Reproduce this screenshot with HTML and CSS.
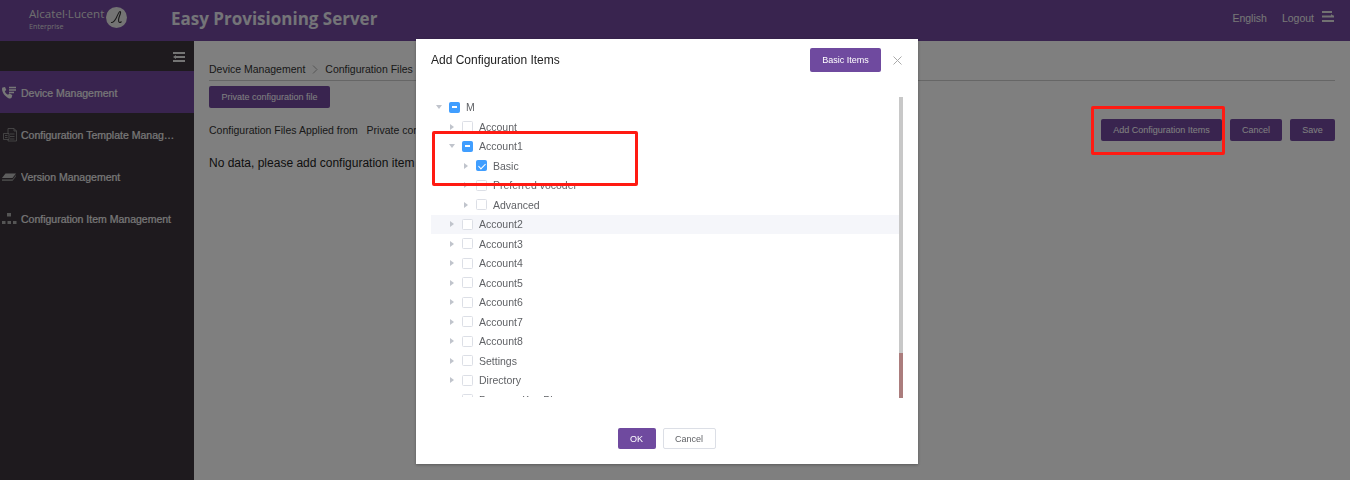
FILE: index.html
```html
<!DOCTYPE html>
<html lang="en">
<head>
    <meta charset="UTF-8">
    <meta name="viewport" content="width=device-width, initial-scale=1.0">
    <title>Easy Provisioning Server</title>
    <link rel="stylesheet" href="styles.css">
</head>
<body>

<header class="topbar">
    <div class="logo">
        <div class="logo-text">
            <span class="logo-name">Alcatel·Lucent</span>
            <span class="logo-sub">Enterprise</span>
        </div>
        <svg class="logo-mark" width="21" height="21" viewBox="0 0 21 21">
            <circle cx="10.5" cy="10.5" r="10.5" fill="#e8e8e8"/>
            <path d="M5 15.500c2 .5 4-2 5.500-5S13 4.500 14 4.500c1 0 .5 2-.5 4.500s-1.500 6 0 6.500c.8.200 1.500-.5 2-1" fill="none" stroke="#333" stroke-width="1.100"/>
        </svg>
    </div>
    <div class="app-title">Easy Provisioning Server</div>
    <nav class="topnav">
        <a>English</a>
        <a>Logout</a>
        <svg width="12" height="11" viewBox="0 0 12 11">
            <path d="M0 1h10M0 5.500h12M0 10h12" stroke="#e4e4e4" stroke-width="1.800"/>
            <path d="M9 3l3 2.500H9z" fill="#e4e4e4"/>
        </svg>
    </nav>
</header>

<div class="layout">
    <aside class="sidebar">
        <div class="side-toggle">
            <svg width="12" height="10" viewBox="0 0 12 10">
                <path d="M0 1h12M3 5h9M0 9h12" stroke="#e8e8e8" stroke-width="1.800"/>
                <path d="M3 3L0 5l3 2z" fill="#e8e8e8"/>
            </svg>
        </div>
        <a class="side-item active">
            <svg class="side-icon" width="17" height="14" viewBox="0 0 17 14">
                <path d="M1.500 1.500l2.500-.5 1.300 3-1.500 1.200c.6 1.600 1.800 2.900 3.300 3.600l1.200-1.400 3 1.500-.6 2.700c-.4.8-1.500 1.100-2.700.8C4.500 10.900 1.300 7.200 1 3.300c0-.7.100-1.400.5-1.800z" fill="#eee"/>
                <path d="M8 1.500h7M8 4h7M8 6.500h5" stroke="#eee" stroke-width="1.300"/>
            </svg>
            <span class="side-label">Device Management</span>
        </a>
        <a class="side-item">
            <svg class="side-icon" width="17" height="14" viewBox="0 0 17 14">
                <path d="M7 .5h6l2.500 2.500v10H7zM13 .5V3h2.500M9 6h4.500M9 8.500h4.500M9 11h4.500" fill="none" stroke="#999" stroke-width=".8"/>
                <path d="M2.500 5.500H8v6H2.500z" fill="#3c343c" stroke="#999" stroke-width=".8"/>
                <path d="M4 7.500h2.500M4 9.500h2.500" stroke="#999" stroke-width=".8"/>
            </svg>
            <span class="side-label">Configuration Template Management</span>
        </a>
        <a class="side-item">
            <svg class="side-icon" width="17" height="14" viewBox="0 0 17 14">
                <path d="M4.500 3.500H15L11.500 8H1z" fill="#bbb"/>
                <path d="M1 9.200h10.500L15 5v1.500L11.500 11H1z" fill="#888"/>
            </svg>
            <span class="side-label">Version Management</span>
        </a>
        <a class="side-item">
            <svg class="side-icon" width="17" height="14" viewBox="0 0 17 14">
                <path d="M6 1h4v3.500H6z" fill="#aaa"/>
                <path d="M1 9h3.500v3H1zM6.500 9H10v3H6.500zM12 9h3.500v3H12z" fill="#aaa"/>
            </svg>
            <span class="side-label">Configuration Item Management</span>
        </a>
    </aside>

    <main class="content">
        <div class="breadcrumb">
            <span>Device Management</span>
            <svg width="6" height="9" viewBox="0 0 6 9"><path d="M1 .5l4 4-4 4" fill="none" stroke="#aaa"/></svg>
            <span>Configuration Files</span>
        </div>
        <div class="tabs">
            <button class="btn">Private configuration file</button>
        </div>
        <div class="apply-row">
            <span class="apply-text">Configuration Files Applied from &nbsp; Private configuration file</span>
            <div class="apply-actions">
                <button class="btn btn-add">Add Configuration Items</button>
                <button class="btn btn-cancel">Cancel</button>
                <button class="btn btn-save">Save</button>
            </div>
        </div>
        <p class="no-data">No data, please add configuration item</p>
    </main>
</div>

<div class="overlay"></div>

<div class="modal">
    <div class="modal-head">
        <h2 class="modal-title">Add Configuration Items</h2>
        <button class="btn btn-basic">Basic Items</button>
        <svg class="modal-close" width="9" height="9" viewBox="0 0 9 9"><path d="M.5.500l8 8M8.500.500l-8 8" stroke="#aaa"/></svg>
    </div>
    <div class="modal-body">
        <div class="tree">
            <div class="row lvl0"><i class="caret open"></i><i class="check half"></i><span>M</span></div>
            <div class="row lvl1"><i class="caret"></i><i class="check"></i><span>Account</span></div>
            <div class="row lvl1"><i class="caret open"></i><i class="check half"></i><span>Account1</span></div>
            <div class="row lvl2"><i class="caret"></i><i class="check on"></i><span>Basic</span></div>
            <div class="row lvl2"><i class="caret"></i><i class="check"></i><span>Preferred vocoder</span></div>
            <div class="row lvl2"><i class="caret"></i><i class="check"></i><span>Advanced</span></div>
            <div class="row lvl1 hover"><i class="caret"></i><i class="check"></i><span>Account2</span></div>
            <div class="row lvl1"><i class="caret"></i><i class="check"></i><span>Account3</span></div>
            <div class="row lvl1"><i class="caret"></i><i class="check"></i><span>Account4</span></div>
            <div class="row lvl1"><i class="caret"></i><i class="check"></i><span>Account5</span></div>
            <div class="row lvl1"><i class="caret"></i><i class="check"></i><span>Account6</span></div>
            <div class="row lvl1"><i class="caret"></i><i class="check"></i><span>Account7</span></div>
            <div class="row lvl1"><i class="caret"></i><i class="check"></i><span>Account8</span></div>
            <div class="row lvl1"><i class="caret"></i><i class="check"></i><span>Settings</span></div>
            <div class="row lvl1"><i class="caret"></i><i class="check"></i><span>Directory</span></div>
            <div class="row lvl1"><i class="caret"></i><i class="check"></i><span>Program Key Plan</span></div>
        </div>
        <div class="scrollbar"><div class="scroll-thumb"></div></div>
    </div>
    <div class="modal-foot">
        <button class="btn btn-ok">OK</button>
        <button class="btn btn-plain">Cancel</button>
    </div>
</div>

<!-- red annotation boxes from the screenshot -->
<div class="mark mark-tree"></div>
<div class="mark mark-add"></div>

</body>
</html>
```

FILE: styles.css
```css
* {
    box-sizing: border-box;
}
html, body {
    height: 100%;
}
body {
    margin: 0;
    font-family: "Liberation Sans", Arial, sans-serif;
    font-size: 10.5px;
    color: #333;
    background: #fff;
    overflow: hidden;
}
.topbar {
    height: 41px;
    background: #72499f;
    display: flex;
    align-items: center;
    color: #eee;
}
.logo {
    display: flex;
    align-items: center;
    width: 171px;
    padding-left: 29px;
    padding-bottom: 2px;
    flex: none;
}
.logo-text {
    display: flex;
    flex-direction: column;
    width: 77px;
    color: #ddd;
}
.logo-name {
    font-family: "Open Sans", sans-serif;
    font-size: 11.600px;
    line-height: 13px;
    white-space: nowrap;
    margin-top: -1px;
}
.logo-sub {
    font-family: "Open Sans", sans-serif;
    font-size: 7.200px;
    line-height: 9px;
    margin-top: 2px;
}
.logo-mark {
    margin-top: -4px;
}
.app-title {
    font-family: "Open Sans", sans-serif;
    font-weight: 700;
    font-size: 17px;
    color: #e8e8f0;
    padding-bottom: 4px;
}
.topnav {
    margin-left: auto;
    display: flex;
    align-items: center;
    gap: 15px;
    padding-right: 16px;
    padding-bottom: 5px;
}
.topnav svg {
    margin-left: -7px;
    margin-top: -3px;
}
.layout {
    display: flex;
    height: 439px;
}
.sidebar {
    width: 194px;
    flex: none;
    background: #3c343c;
}
.side-toggle {
    height: 30px;
    display: flex;
    align-items: center;
    justify-content: flex-end;
    padding-right: 9px;
    padding-top: 2px;
}
.side-item {
    height: 42px;
    display: flex;
    align-items: center;
    gap: 3px;
    padding-left: 1px;
    padding-top: 2px;
    color: #f0f0f0;
}
.side-item.active {
    background: #72499f;
}
.side-icon {
    flex: none;
}
.side-label {
    width: 154px;
    white-space: nowrap;
    overflow: hidden;
    text-overflow: ellipsis;
    -webkit-text-stroke: .2px;
}
.content {
    flex: 1;
    padding: 0 15px;
    background: #fff;
}
.breadcrumb {
    height: 40px;
    display: flex;
    align-items: center;
    gap: 7px;
    padding-top: 17px;
    border-bottom: 1px solid #ccc;
}
.tabs {
    padding-top: 5px;
}
.btn {
    font-family: "Liberation Sans", Arial, sans-serif;
    font-size: 9px;
    border: none;
    border-radius: 2px;
    background: #72499f;
    color: #fff;
    padding: 0;
    height: 22px;
    cursor: pointer;
}
.tabs .btn {
    width: 121px;
}
.apply-row {
    display: flex;
    align-items: center;
    height: 22px;
    margin-top: 11px;
}
.apply-actions {
    margin-left: auto;
    display: flex;
    gap: 8px;
}
.btn-add {
    width: 121px;
}
.btn-cancel {
    width: 52px;
}
.btn-save {
    width: 45px;
}
.no-data {
    margin: 15px 0 0;
    font-size: 12px;
    line-height: 14px;
    color: #222;
}
.overlay {
    position: fixed;
    inset: 0;
    background: rgba(0, 0, 0, .5);
}
.modal {
    position: fixed;
    left: 416px;
    top: 39px;
    width: 502px;
    height: 425px;
    background: #fff;
    box-shadow: 0 1px 3px rgba(0, 0, 0, .3);
    display: flex;
    flex-direction: column;
    padding: 0 15px;
}
.modal-head {
    display: flex;
    align-items: center;
    height: 42px;
    margin-bottom: 16px;
    flex: none;
}
.modal-title {
    margin: 0;
    font-size: 12px;
    font-weight: normal;
    color: #222;
}
.btn-basic {
    margin-left: auto;
    margin-right: 1px;
    width: 71px;
    height: 24px;
    background: #6f4a9f;
}
.modal-close {
    margin-left: 11px;
    margin-right: 1px;
}
.modal-body {
    display: flex;
    height: 301px;
}
.tree {
    width: 468px;
    height: 300px;
    padding-top: .5px;
    overflow: hidden;
}
.row {
    height: 19.500px;
    display: flex;
    align-items: center;
    color: #606266;
}
.row.hover {
    background: #f5f6fa;
}
.lvl0 {
    padding-left: 2px;
}
.lvl1 {
    padding-left: 15px;
}
.lvl2 {
    padding-left: 29px;
}
.caret {
    width: 12px;
    margin-right: 4px;
    display: flex;
    justify-content: center;
    flex: none;
}
.caret::before {
    content: "";
    border-left: 4px solid #c0c4cc;
    border-top: 3.500px solid transparent;
    border-bottom: 3.500px solid transparent;
}
.caret.open::before {
    border-top: 4px solid #c0c4cc;
    border-left: 3.500px solid transparent;
    border-right: 3.500px solid transparent;
    border-bottom: none;
}
.check {
    width: 11px;
    height: 11px;
    border: 1px solid #dcdfe6;
    border-radius: 1.500px;
    background: #fff;
    margin-right: 6px;
    flex: none;
    position: relative;
}
.check.half, .check.on {
    background: #409eff;
    border-color: #409eff;
}
.check.half::after {
    content: "";
    position: absolute;
    left: 2px;
    right: 2px;
    top: 3.500px;
    height: 1.500px;
    background: #fff;
}
.check.on::after {
    content: "";
    position: absolute;
    left: 3px;
    top: 0.500px;
    width: 3px;
    height: 6px;
    border: solid #fff;
    border-width: 0 1px 1px 0;
    transform: rotate(45deg);
}
.scrollbar {
    width: 4px;
    height: 301px;
    background: #c8c8c8;
    display: flex;
    align-items: flex-end;
}
.scroll-thumb {
    width: 4px;
    height: 45px;
    background: #ab7d7d;
}
.modal-foot {
    display: flex;
    justify-content: center;
    gap: 7px;
    padding-top: 30px;
    padding-right: 1px;
}
.btn-ok {
    width: 38px;
    height: 21px;
    background: #6f4a9f;
}
.btn-plain {
    width: 53px;
    height: 21px;
    background: #fff;
    border: 1px solid #dcdfe6;
    color: #606266;
}
.mark {
    position: fixed;
    border: 3px solid #ff1a12;
    border-radius: 2px;
}
.mark-tree {
    left: 432px;
    top: 131px;
    width: 206px;
    height: 55px;
}
.mark-add {
    left: 1091px;
    top: 106px;
    width: 134px;
    height: 49px;
}
```
